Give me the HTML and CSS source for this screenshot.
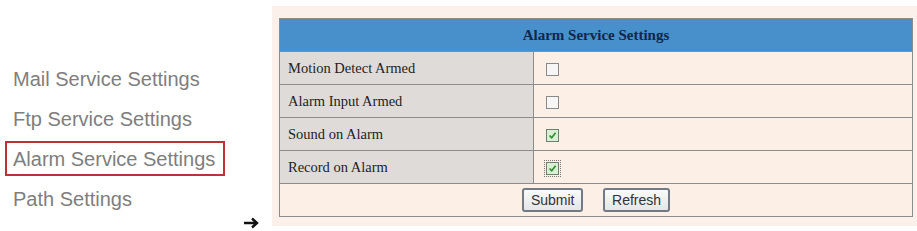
FILE: index.html
```html
<!DOCTYPE html>
<html lang="en">
<head>
    <meta charset="UTF-8">
    <title>Alarm Service Settings</title>
    <link rel="stylesheet" href="styles.css">
</head>
<body>

<div class="page">
    <div class="menu">
        <div class="menu-item">Mail Service Settings</div>
        <div class="menu-item">Ftp Service Settings</div>
        <div class="menu-item active">Alarm Service Settings</div>
        <div class="menu-item">Path Settings</div>
        <div class="arrow">
            <svg width="16" height="12" viewBox="0 0 16 12">
                <path d="M1 6 H14 M9 1.5 L14 6 L9 10.5" fill="none" stroke="#111" stroke-width="2.4"/>
            </svg>
        </div>
    </div>

    <div class="panel">
        <table class="settings">
            <tr>
                <th colspan="2">Alarm Service Settings</th>
            </tr>
            <tr>
                <td class="label">Motion Detect Armed</td>
                <td class="value"><span class="check"></span></td>
            </tr>
            <tr>
                <td class="label">Alarm Input Armed</td>
                <td class="value"><span class="check"></span></td>
            </tr>
            <tr>
                <td class="label">Sound on Alarm</td>
                <td class="value">
                    <span class="check on">
                        <svg width="9" height="9" viewBox="0 0 9 9"><path d="M1.5 4.5 L3.7 6.8 L7.6 1.8" fill="none" stroke="#2f8a2f" stroke-width="1.6"/></svg>
                    </span>
                </td>
            </tr>
            <tr>
                <td class="label">Record on Alarm</td>
                <td class="value">
                    <span class="check on focus">
                        <svg width="9" height="9" viewBox="0 0 9 9"><path d="M1.5 4.5 L3.7 6.8 L7.6 1.8" fill="none" stroke="#2f8a2f" stroke-width="1.6"/></svg>
                    </span>
                </td>
            </tr>
            <tr>
                <td colspan="2" class="buttons">
                    <button type="button">Submit</button>
                    <button type="button">Refresh</button>
                </td>
            </tr>
        </table>
    </div>
</div>

</body>
</html>
```

FILE: styles.css
```css
body {
    margin: 0;
    background: #fff;
    font-family: "Liberation Sans", Arial, sans-serif;
}
.page {
    display: flex;
    width: 917px;
    height: 231px;
    overflow: hidden;
}
.menu {
    width: 272px;
    flex-shrink: 0;
    padding: 61px 0 0 5px;
    box-sizing: border-box;
}
.menu-item {
    display: inline-block;
    height: 35px;
    line-height: 33px;
    padding: 0 8px 0 6px;
    margin-bottom: 5px;
    border: 2px solid transparent;
    box-sizing: border-box;
    font-size: 20px;
    color: #7e7e7e;
    white-space: nowrap;
}
.menu-item.active {
    border-color: #c03038;
}
.arrow {
    margin: -4px 0 0 238px;
    height: 12px;
    line-height: 0;
}
.panel {
    flex: 1;
    margin-top: 6px;
    height: 220px;
    box-sizing: border-box;
    padding: 12px 0 0 7px;
    background: #fbf1ea;
}
.settings {
    width: 634px;
    border-collapse: collapse;
    border: 1px solid #8c8c8c;
    font-family: "Liberation Serif", "Times New Roman", serif;
    font-size: 14.5px;
    color: #1e1e1e;
}
.settings th {
    height: 32px;
    padding: 0;
    background: #4790cb;
    color: #13264a;
    font-size: 15px;
    font-weight: bold;
    text-align: center;
    border-bottom: 1px solid #8c8c8c;
}
.settings td {
    height: 32px;
    padding: 0;
    border-bottom: 1px solid #8c8c8c;
}
.settings td.label {
    width: 254px;
    padding-left: 8px;
    box-sizing: border-box;
    background: #dedbd9;
    border-right: 1px solid #8c8c8c;
}
.settings td.value {
    padding-left: 12px;
    background: #fbefe6;
}
.check {
    display: inline-block;
    width: 13px;
    height: 13px;
    box-sizing: border-box;
    border: 1px solid #8a8a8a;
    background: #f6f6f6;
    vertical-align: middle;
    line-height: 0;
    padding: 1px;
}
.check.on {
    background: #d8f0d4;
    border-color: #6f7f6f;
}
.check.focus {
    outline: 1px dotted #777;
    outline-offset: 1px;
}
.settings td.buttons {
    height: 32px;
    text-align: center;
    background: #fbefe6;
}
.buttons button {
    height: 24px;
    padding: 0 7px;
    margin: 0 8px;
    font-family: "Liberation Sans", Arial, sans-serif;
    font-size: 14px;
    color: #333;
    background: linear-gradient(#fafafa, #e4e6e8);
    border: 2px solid #727a86;
    border-radius: 3px;
}
```
